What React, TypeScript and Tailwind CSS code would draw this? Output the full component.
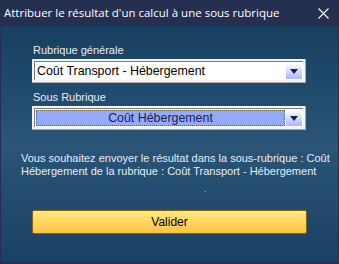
import React from 'react';

function Combo({ value, focused }: { value: string; focused?: boolean }) {
  return (
    <div className="h-[24px] bg-[#f4f4f4] border-r border-b border-[#a8a8a8] p-[2px]">
      <div className="h-full flex border-t border-l border-[#7a7a7a] bg-white">
        {focused ? (
          <div className="flex-1 m-[1px] bg-[#94aaff] border border-dotted border-[#6b5a2a] flex items-center justify-center text-[12.4px] leading-none text-[#1c1c4c]">
            {value}
          </div>
        ) : (
          <div className="flex-1 flex items-center pl-[2px] text-[12.4px] leading-none text-black">
            {value}
          </div>
        )}
        <div className="w-[16px] my-[1px] mr-[1px] bg-gradient-to-b from-white to-[#a9b6ff] flex items-center justify-center">
          <svg width="8" height="5" viewBox="0 0 8 5">
            <path d="M0 0h8L4 5z" fill="#14203a" />
          </svg>
        </div>
      </div>
    </div>
  );
}

export default function App() {
  return (
    <div className="w-[339px] h-[264px] flex flex-col bg-[#252f4f] font-['Liberation_Sans',Arial,sans-serif]">
      {/* Title bar */}
      <div className="h-[26px] flex items-center justify-between pl-[4px] pr-[10px] text-white">
        <span className="text-[11.5px] font-['Open_Sans','Noto_Sans',sans-serif]">
          Attribuer le résultat d'un calcul à une sous rubrique
        </span>
        <svg width="11" height="11" viewBox="0 0 11 11">
          <path d="M0.5 0.5l10 10M10.5 0.5l-10 10" stroke="#ffffff" strokeWidth="1.1" />
        </svg>
      </div>

      {/* Body */}
      <div className="flex-1 mx-[1px] mb-[2px] bg-gradient-to-b from-[#163f60] via-[#2a5576] to-[#1a4165] flex flex-col">
        <div className="pl-[31px] pr-[32px] pt-[18px] flex flex-col">
          <span className="text-[11px] leading-[13px] text-[#e8eef5] ml-[1px]">Rubrique générale</span>
          <div className="mt-[2px]">
            <Combo value="Coût Transport - Hébergement" />
          </div>
          <span className="mt-[8px] text-[11px] leading-[13px] text-[#e8eef5] ml-[1px]">Sous Rubrique</span>
          <div className="mt-[2px]">
            <Combo value="Coût Hébergement" focused />
          </div>
        </div>

        <p className="mt-[22px] pl-[20px] whitespace-nowrap text-[11px] leading-[13px] text-[#e6edf5]">
          Vous souhaitez envoyer le résultat dans la sous-rubrique : Coût
          <br />
          Hébergement de la rubrique : Coût Transport - Hébergement
        </p>
        <div className="mt-[8px] h-[8px] pl-[203px] text-[8px] leading-none text-[#e6edf5]">.</div>

        <div className="mt-[15px] px-[31px]">
          <button className="w-full h-[24px] rounded-[2px] border border-[#8a6510] bg-gradient-to-b from-[#ffea80] to-[#ffc23e] text-[12px] text-black">
            Valider
          </button>
        </div>
      </div>
    </div>
  );
}
